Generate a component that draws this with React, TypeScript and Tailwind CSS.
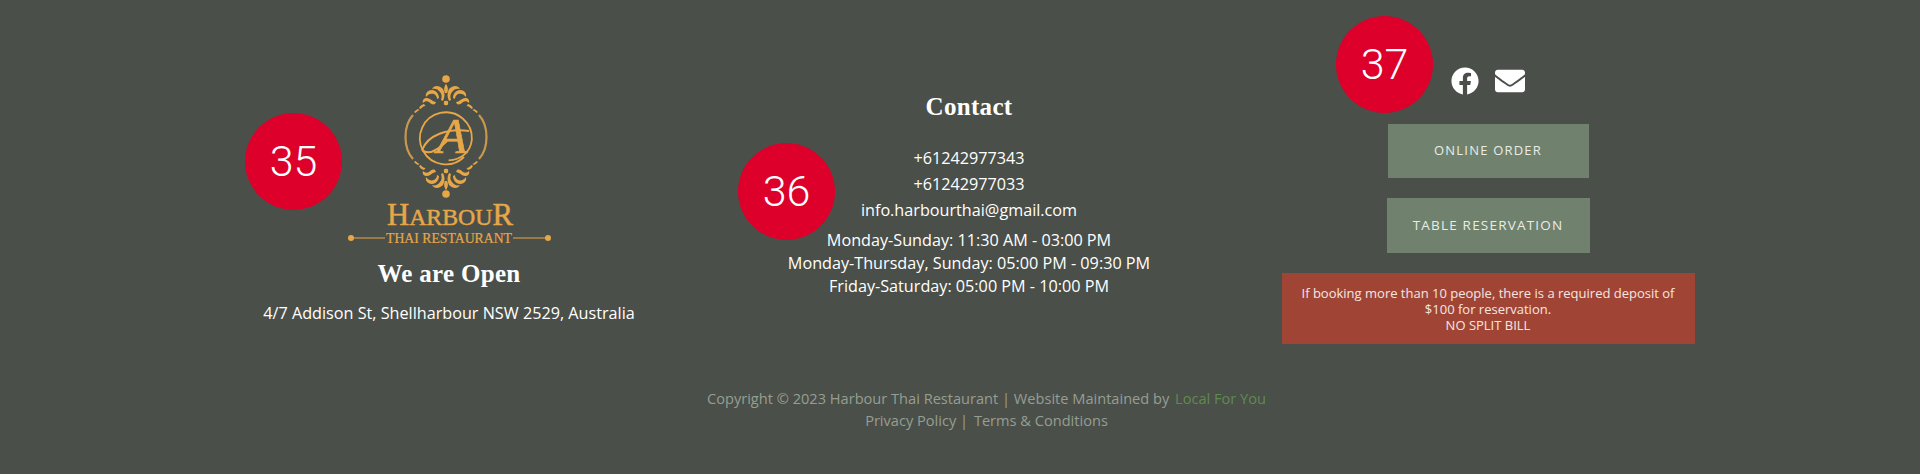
import { FaFacebook, FaEnvelope } from "react-icons/fa";

const GOLD = "#e6a748";

function Half() {
  return (
    <g fill={GOLD}>
      <path d="M447 84c-2 3-2 6-1 9h2c1-3 1-6-1-9z" />
      <path d="M444 89c-4-4-9-4-11 0 3-1 6 0 8 3 2 2 2 5 1 8l2 1c2-4 2-8 0-12z" />
      <path d="M433 90c-4 0-7 3-6 7 2-3 5-4 8-3 2 1 3 3 3 5l2-1c0-4-3-8-7-8z" />
      <path d="M428 98c-3 0-5 2-4 5 2-2 4-2 6-1 2 2 4 3 6 2l1-2c-3 0-6-4-9-4z" />
      <circle cx="447" cy="103" r="2.200" />
      <path d="M425 104c-3 1-4 2-5 4l1.500 1c2-2 3-3 5-3z" />
      <path d="M419 109c-2 1-3 2-4 3l1.500 1c1-1 2-2 4-3z" />
    </g>
  );
}

function Logo() {
  return (
    <svg width="220" height="180" viewBox="340 70 220 180" className="mx-auto block" aria-label="Harbour Thai Restaurant">
      <circle cx="447" cy="79" r="3.800" fill={GOLD} />
      <circle cx="447" cy="194" r="3.800" fill={GOLD} />
      <Half />
      <g transform="translate(894 0) scale(-1 1)"><Half /></g>
      <g transform="translate(0 274) scale(1 -1)"><Half /></g>
      <g transform="translate(894 274) scale(-1 -1)"><Half /></g>
      <path d="M414 115C404 126 404 148 414 159M480 115C490 126 490 148 480 159" fill="none" stroke="#c8984e" strokeWidth="2.200" />
      <path d="M467 155A26 26 0 1 1 473 137C473 150 464 158 452 160" fill="none" stroke={GOLD} strokeWidth="1.800" transform="rotate(6 447 137)" />
      <path d="M423 150C429 135 448 128 470 131M423 150C430 156 440 149 448 141" fill="none" stroke={GOLD} strokeWidth="2" />
      <text x="453" y="153" textAnchor="middle" fill={GOLD} stroke={GOLD} strokeWidth="0.600" fontFamily="'Liberation Serif', serif" fontStyle="italic" fontSize="50">A</text>
      <text x="451" y="225" textAnchor="middle" fill={GOLD} stroke={GOLD} strokeWidth="0.500" fontFamily="'Liberation Serif', serif" fontSize="24" textLength="126" lengthAdjust="spacingAndGlyphs">
        <tspan fontSize="31">H</tspan>ARBOU<tspan fontSize="31">R</tspan>
      </text>
      <text x="450" y="243" textAnchor="middle" fill={GOLD} stroke={GOLD} strokeWidth="0.200" fontFamily="'Liberation Serif', serif" fontSize="14" textLength="126" lengthAdjust="spacingAndGlyphs">THAI RESTAURANT</text>
      <path d="M352 238H386M514 238H549" stroke={GOLD} strokeWidth="1.200" />
      <circle cx="352" cy="238" r="3" fill={GOLD} />
      <circle cx="549" cy="238" r="3" fill={GOLD} />
    </svg>
  );
}

function Badge({ n, className }: { n: number; className: string }) {
  return (
    <div className={`absolute flex h-[97px] w-[97px] items-center justify-center rounded-full bg-[#dc002a] font-['Roboto',sans-serif] text-[43px] font-light text-white ${className}`}>
      {n}
    </div>
  );
}

export default function App() {
  return (
    <div className="relative h-[474px] overflow-hidden bg-[#4b4f49] font-['Open_Sans',sans-serif] text-white">
      <div className="ml-[189px] grid h-[387px] w-[1560px] grid-cols-3">
        <div className="pt-[70px] text-center">
          <Logo />
          <h3 className="mt-[9px] font-['Liberation_Serif',serif] text-[25px] leading-[30px] font-bold tracking-[0.3px]">We are Open</h3>
          <p className="mt-[11px] text-[16.2px] leading-[26px]">4/7 Addison St, Shellharbour NSW 2529, Australia</p>
        </div>
        <div className="pt-[92px] text-center">
          <h3 className="font-['Liberation_Serif',serif] text-[25px] leading-[30px] font-bold tracking-[0.3px]">Contact</h3>
          <div className="mt-[23px] text-[16.2px] leading-[26px]">
            <p>+61242977343</p>
            <p>+61242977033</p>
            <p>info.harbourthai@gmail.com</p>
          </div>
          <div className="mt-1.5 text-[16.2px] leading-[23px]">
            <p>Monday-Sunday: 11:30 AM - 03:00 PM</p>
            <p>Monday-Thursday, Sunday: 05:00 PM - 09:30 PM</p>
            <p>Friday-Saturday: 05:00 PM - 10:00 PM</p>
          </div>
        </div>
        <div className="flex flex-col items-center pt-[67px] pr-[2px]">
          <div className="flex h-[28px] items-center gap-4">
            <FaFacebook size={28} color="#ffffff" />
            <FaEnvelope size={30} color="#ffffff" />
          </div>
          <a className="mt-[29px] flex h-[54px] w-[201px] items-center justify-center bg-[#70826d] text-[13px] font-medium tracking-[1.2px] text-[#e8ece8]">ONLINE ORDER</a>
          <a className="mt-5 flex h-[55px] w-[203px] items-center justify-center bg-[#70826d] text-[13.5px] font-medium tracking-[1.2px] text-[#e8ece8]">TABLE RESERVATION</a>
          <div className="mt-5 flex h-[71px] w-[413px] items-center justify-center bg-[#a04535] px-4 text-center text-[13px] leading-[16px] text-[#f5e6e2]">
            <p>
              If booking more than 10 people, there is a required deposit of $100 for reservation.
              <br />
              NO SPLIT BILL
            </p>
          </div>
        </div>
      </div>
      <div className="pl-[53px] text-center text-[14.6px] leading-[22px] text-[#959e93]">
        <p>
          Copyright © 2023 Harbour Thai Restaurant | Website Maintained by <a className="ml-0.5 text-[#5f8a4f]">Local For You</a>
        </p>
        <p>
          Privacy Policy | <a className="ml-0.5">Terms &amp; Conditions</a>
        </p>
      </div>
      <Badge n={35} className="left-[245px] top-[113px]" />
      <Badge n={36} className="left-[738px] top-[143px]" />
      <Badge n={37} className="left-[1336px] top-[16px]" />
    </div>
  );
}
